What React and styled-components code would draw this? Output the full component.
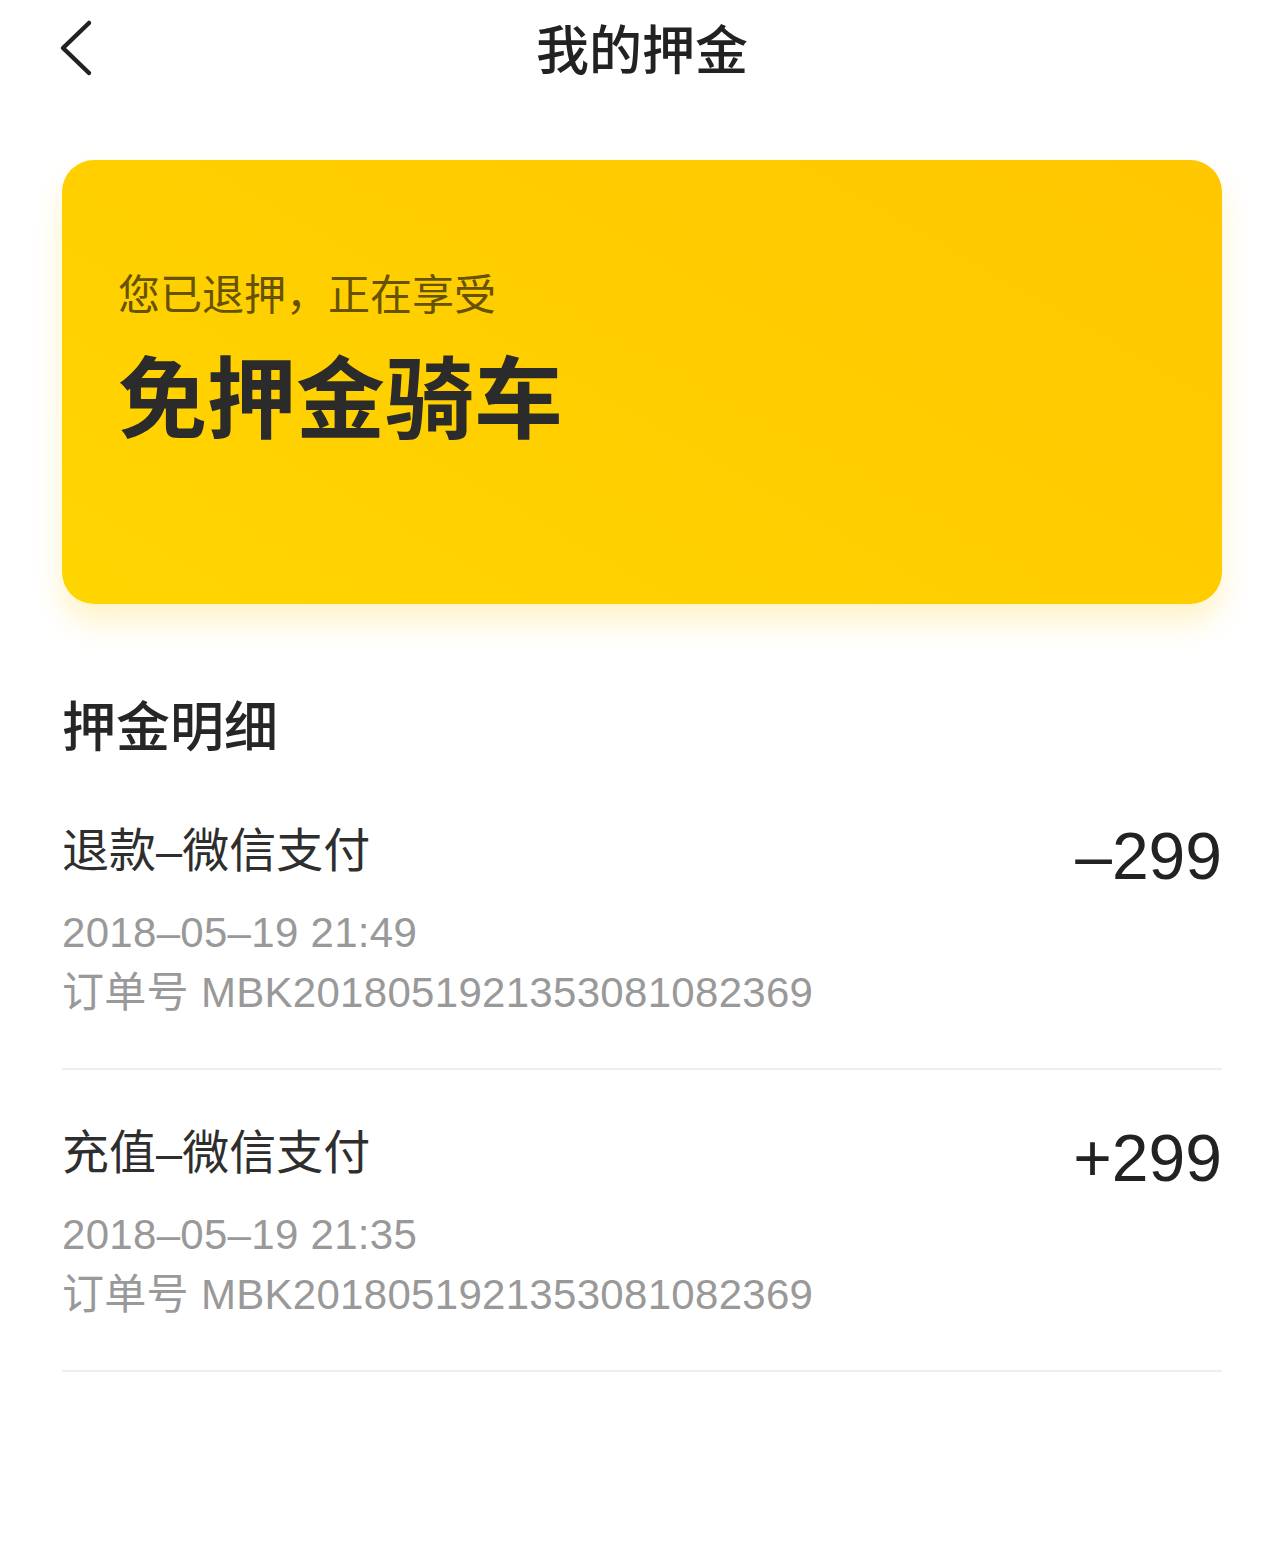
import React from 'react';
import styled, { createGlobalStyle } from 'styled-components';

const GlobalStyle = createGlobalStyle`
    body {
        margin: 0;
        background: #ffffff;
        font-family: "Noto Sans CJK SC", sans-serif;
    }
`;

const Page = styled.div`
    width: 1284px;
    min-height: 1542px;
    background: #ffffff;
`;

const Header = styled.div`
    display: grid;
    grid-template-columns: 1fr auto 1fr;
    align-items: center;
    height: 95px;
    padding: 0 55px;
`;

const BackButton = styled.button`
    justify-self: start;
    display: flex;
    align-items: center;
    padding: 0;
    border: none;
    background: none;
    cursor: pointer;
`;

const HeaderTitle = styled.h1`
    margin: 0;
    font-size: 53px;
    line-height: 1;
    font-weight: 500;
    color: #222222;
`;

const Content = styled.div`
    padding: 65px 62px 0;
`;

const DepositCard = styled.div`
    height: 444px;
    box-sizing: border-box;
    padding: 111px 56px 0;
    border-radius: 32px;
    background: linear-gradient(30deg, #ffd500 0%, #ffcd00 55%, #ffc700 100%);
    box-shadow: 0 18px 30px rgba(255, 200, 0, 0.22);
`;

const CardNote = styled.p`
    margin: 0;
    font-size: 42px;
    line-height: 1;
    color: #665200;
`;

const CardHeadline = styled.h2`
    margin: 35px 0 0;
    font-size: 89px;
    line-height: 1;
    font-weight: 700;
    color: #2b2b2b;
`;

const SectionTitle = styled.h3`
    margin: 93px 0 17px;
    font-size: 54px;
    line-height: 1;
    font-weight: 500;
    color: #262626;
`;

const Record = styled.div`
    padding: 55px 0 45px;
    border-bottom: 2px solid #eeeeee;
`;

const RecordTop = styled.div`
    display: flex;
    justify-content: space-between;
    align-items: flex-start;
`;

const RecordTitle = styled.div`
    margin-top: 4px;
    font-family: "Liberation Sans", "Noto Sans CJK SC", sans-serif;
    font-size: 47px;
    line-height: 1;
    color: #2e2e2e;
`;

const Amount = styled.div`
    font-family: "Liberation Sans", Arial, sans-serif;
    font-size: 66px;
    line-height: 1;
    color: #222222;
`;

const Meta = styled.div`
    font-family: "Liberation Sans", "Noto Sans CJK SC", sans-serif;
    font-size: 42px;
    line-height: 60px;
    letter-spacing: 0.3px;
    color: #999999;
    margin-top: ${props => props.$first ? '14px' : '0'};
`;

const records = [
    { title: '退款–微信支付', amount: '–299', time: '2018–05–19 21:49', order: 'MBK2018051921353081082369' },
    { title: '充值–微信支付', amount: '+299', time: '2018–05–19 21:35', order: 'MBK2018051921353081082369' },
];

const BackIcon = () => (
    <svg width="40" height="60" viewBox="0 0 40 60" fill="none">
        <path d="M34 5 L8 30 L34 55" stroke="#222" strokeWidth="4.5" strokeLinecap="round" strokeLinejoin="round" />
    </svg>
);

const App = () => {
    return (
        <Page>
            <GlobalStyle />
            <Header>
                <BackButton aria-label="back"><BackIcon /></BackButton>
                <HeaderTitle>我的押金</HeaderTitle>
                <div />
            </Header>
            <Content>
                <DepositCard>
                    <CardNote>您已退押，正在享受</CardNote>
                    <CardHeadline>免押金骑车</CardHeadline>
                </DepositCard>
                <SectionTitle>押金明细</SectionTitle>
                {records.map((r, i) => (
                    <Record key={i}>
                        <RecordTop>
                            <RecordTitle>{r.title}</RecordTitle>
                            <Amount>{r.amount}</Amount>
                        </RecordTop>
                        <Meta $first>{r.time}</Meta>
                        <Meta>订单号 {r.order}</Meta>
                    </Record>
                ))}
            </Content>
        </Page>
    );
};

export default App;
